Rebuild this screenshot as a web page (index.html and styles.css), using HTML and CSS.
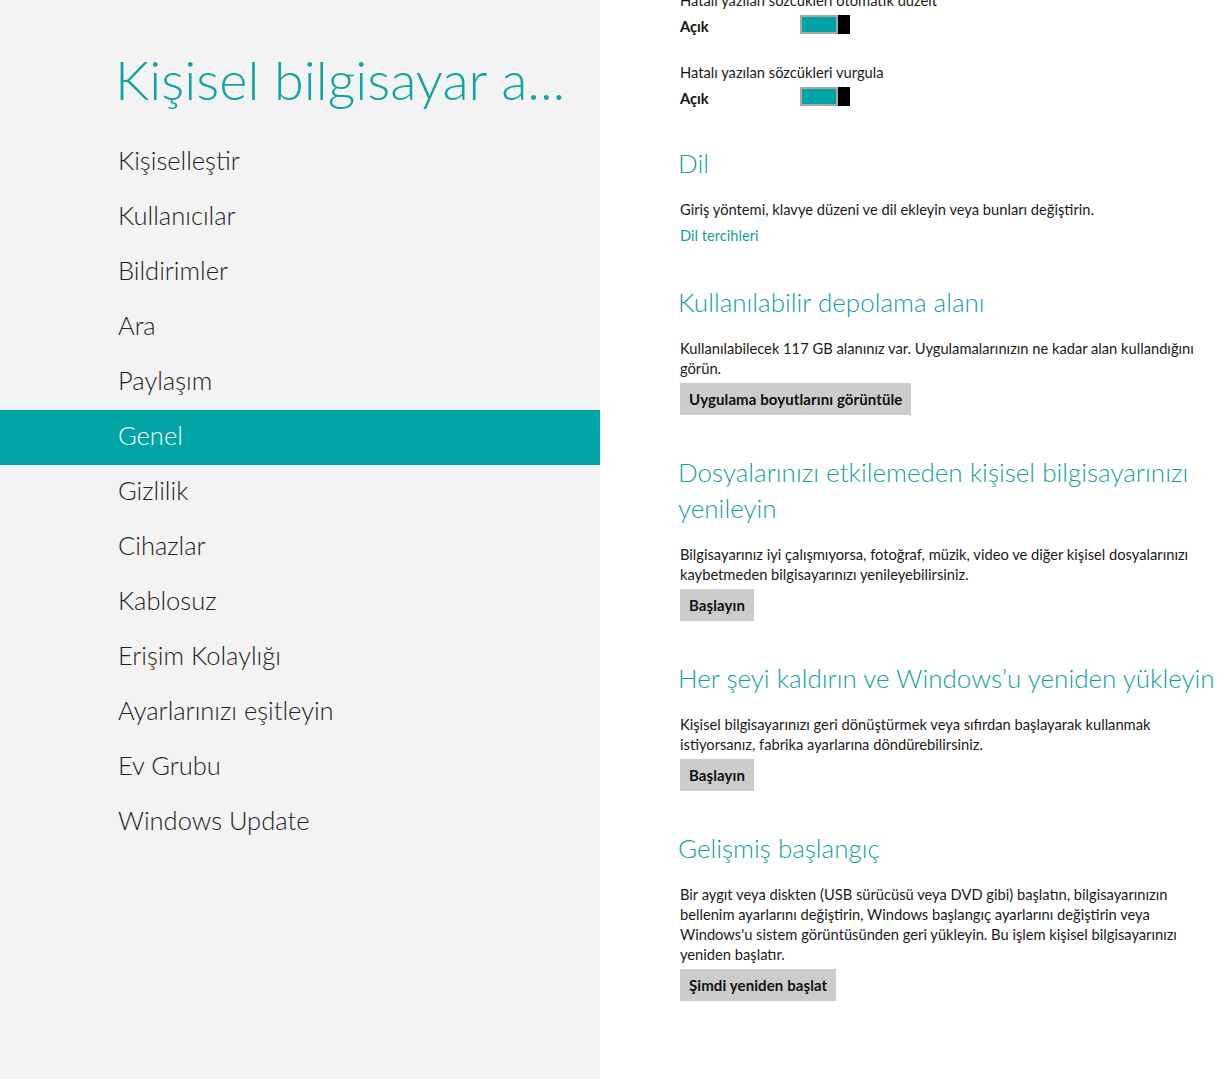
FILE: index.html
```
<!DOCTYPE html>
<html lang="tr">
<head>
<meta charset="utf-8">
<title>Kişisel bilgisayar ayarları</title>
<link rel="stylesheet" href="styles.css">
</head>
<body>
<div class="app">
  <aside class="nav-pane">
    <h1 class="pane-title">Kişisel bilgisayar a...</h1>
    <ul class="nav-list">
      <li class="nav-item">Kişiselleştir</li>
      <li class="nav-item">Kullanıcılar</li>
      <li class="nav-item">Bildirimler</li>
      <li class="nav-item">Ara</li>
      <li class="nav-item">Paylaşım</li>
      <li class="nav-item nav-item-selected">Genel</li>
      <li class="nav-item">Gizlilik</li>
      <li class="nav-item">Cihazlar</li>
      <li class="nav-item">Kablosuz</li>
      <li class="nav-item">Erişim Kolaylığı</li>
      <li class="nav-item">Ayarlarınızı eşitleyin</li>
      <li class="nav-item">Ev Grubu</li>
      <li class="nav-item">Windows Update</li>
    </ul>
  </aside>
  <main class="content-pane">
    <div class="content">
      <div class="toggle-group">
        <div class="toggle-label">Hatalı yazılan sözcükleri otomatik düzelt</div>
        <div class="toggle-row">
          <span class="toggle-state">Açık</span>
          <span class="toggle"><span class="toggle-track"></span><span class="toggle-thumb"></span></span>
        </div>
      </div>
      <div class="toggle-group">
        <div class="toggle-label">Hatalı yazılan sözcükleri vurgula</div>
        <div class="toggle-row">
          <span class="toggle-state">Açık</span>
          <span class="toggle"><span class="toggle-track"></span><span class="toggle-thumb"></span></span>
        </div>
      </div>

      <section class="section section-first">
        <h2 class="section-title">Dil</h2>
        <p class="section-text">Giriş yöntemi, klavye düzeni ve dil ekleyin veya bunları değiştirin.</p>
        <a class="section-link">Dil tercihleri</a>
      </section>

      <section class="section">
        <h2 class="section-title">Kullanılabilir depolama alanı</h2>
        <p class="section-text">Kullanılabilecek 117 GB alanınız var. Uygulamalarınızın ne kadar alan kullandığını görün.</p>
        <button class="btn">Uygulama boyutlarını görüntüle</button>
      </section>

      <section class="section">
        <h2 class="section-title section-title-narrow">Dosyalarınızı etkilemeden kişisel bilgisayarınızı yenileyin</h2>
        <p class="section-text">Bilgisayarınız iyi çalışmıyorsa, fotoğraf, müzik, video ve diğer kişisel dosyalarınızı kaybetmeden bilgisayarınızı yenileyebilirsiniz.</p>
        <button class="btn">Başlayın</button>
      </section>

      <section class="section">
        <h2 class="section-title section-title-wide">Her şeyi kaldırın ve Windows’u yeniden yükleyin</h2>
        <p class="section-text">Kişisel bilgisayarınızı geri dönüştürmek veya sıfırdan başlayarak kullanmak istiyorsanız, fabrika ayarlarına döndürebilirsiniz.</p>
        <button class="btn">Başlayın</button>
      </section>

      <section class="section">
        <h2 class="section-title">Gelişmiş başlangıç</h2>
        <p class="section-text">Bir aygıt veya diskten (USB sürücüsü veya DVD gibi) başlatın, bilgisayarınızın bellenim ayarlarını değiştirin, Windows başlangıç ayarlarını değiştirin veya Windows'u sistem görüntüsünden geri yükleyin. Bu işlem kişisel bilgisayarınızı yeniden başlatır.</p>
        <button class="btn">Şimdi yeniden başlat</button>
      </section>
    </div>
  </main>
</div>
</body>
</html>
```
FILE: styles.css
```
html, body {
  margin: 0;
  padding: 0;
  height: 100%;
  overflow: hidden;
  background: #ffffff;
  font-family: "Lato", "Noto Sans", sans-serif;
}

.app {
  display: flex;
  height: 1079px;
}

.nav-pane {
  width: 600px;
  flex: 0 0 600px;
  background: #f3f3f3;
}

.pane-title {
  margin: 48px 0 23px 0;
  padding-left: 115px;
  font-size: 54px;
  line-height: 64px;
  font-weight: 300;
  color: #0fa4a4;
  white-space: nowrap;
}

.nav-list {
  list-style: none;
  margin: 0;
  padding: 0;
}

.nav-item {
  height: 55px;
  box-sizing: border-box;
  padding-left: 118px;
  font-size: 25.5px;
  line-height: 50px;
  font-weight: 300;
  color: #222222;
}

.nav-item-selected {
  background: #00a4a4;
  color: #ffffff;
}

.content-pane {
  flex: 1;
  padding-left: 80px;
  overflow: hidden;
}

.content {
  margin-top: -10px;
  width: 540px;
}

.toggle-group + .toggle-group {
  margin-top: 26px;
}

.toggle-label {
  font-size: 14.7px;
  line-height: 20px;
  color: #1a1a1a;
}

.toggle-row {
  display: flex;
  align-items: center;
  height: 20px;
  margin-top: 6px;
}

.toggle-state {
  width: 120px;
  font-size: 14.7px;
  font-weight: 700;
  color: #111111;
}

.toggle {
  display: flex;
  height: 19px;
  margin-top: -3px;
}

.toggle-track {
  width: 38px;
  height: 19px;
  box-sizing: border-box;
  border: 2px solid #a8a8a8;
  background: #00a3a3;
}

.toggle-thumb {
  width: 12px;
  height: 19px;
  background: #000000;
}

.section {
  margin-top: 41px;
}

.section-first {
  margin-top: 39px;
}

.section-title {
  margin: -2px 0 18px -2px;
  font-size: 26px;
  line-height: 36px;
  font-weight: 300;
  color: #12a1a1;
}

.section-title-narrow {
  max-width: 520px;
}

.section-title-wide {
  white-space: nowrap;
}

.section-text {
  margin: 0;
  width: 520px;
  font-size: 14.7px;
  line-height: 20px;
  color: #1a1a1a;
}

.section-link {
  display: block;
  margin-top: 6px;
  font-size: 14.7px;
  line-height: 20px;
  color: #1a9c9c;
}

.btn {
  display: block;
  margin-top: 5px;
  height: 32px;
  padding: 0 9px;
  border: none;
  background: #cccccc;
  font-family: inherit;
  font-size: 15px;
  font-weight: 700;
  letter-spacing: 0.1px;
  color: #111111;
}
```
